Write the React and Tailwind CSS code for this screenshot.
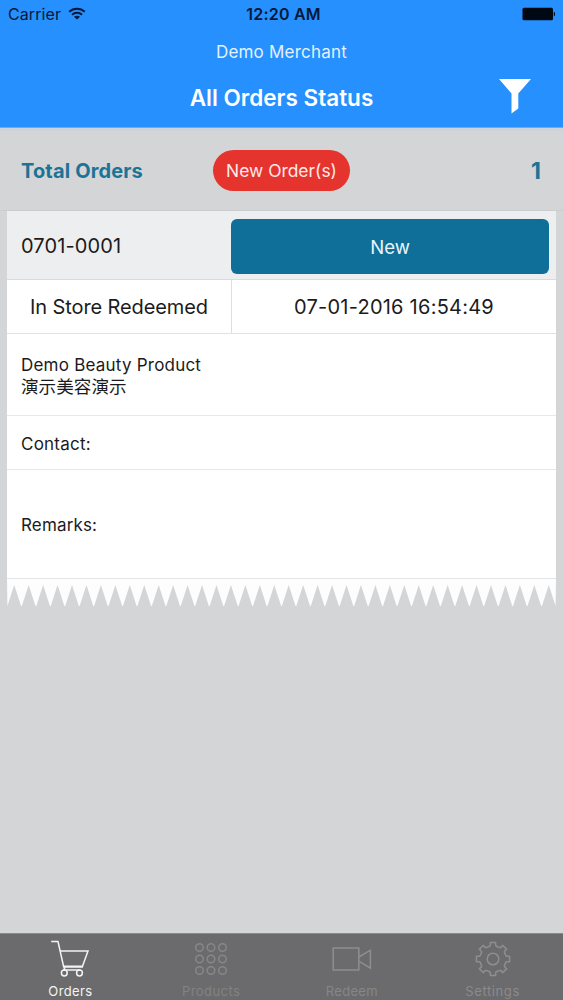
import React from 'react';

const TEETH = 38;

// Points of the torn receipt edge, one notch per tooth
const tornEdge = () => {
    const step = 549 / TEETH;
    const points = ['0,0'];
    for (let i = 0; i < TEETH; i++) {
        const x = i * step;
        points.push(`${(x + 0.4).toFixed(2)},27`);
        points.push(`${(x + step / 2).toFixed(2)},6`);
        points.push(`${(x + step - 0.4).toFixed(2)},27`);
    }
    points.push('549,0');
    return points.join(' ');
};

const gearPoints = () => {
    const points = [];
    for (let i = 0; i < 8; i++) {
        const base = i * 45 - 90;
        [[-15, 13.2], [-11, 14], [-9, 16.8], [9, 16.8], [11, 14], [15, 13.2]].forEach(([offset, r]) => {
            const a = ((base + offset) * Math.PI) / 180;
            points.push(`${(18 + r * Math.cos(a)).toFixed(2)},${(18 + r * Math.sin(a)).toFixed(2)}`);
        });
    }
    return points.join(' ');
};

const WifiIcon = () => (
    <svg width="18" height="14" viewBox="0 0 18 14" fill="none" stroke="#04183a" strokeWidth="2">
        <path d="M1.2 4.7C5.5 0.6 12.5 0.6 16.8 4.7" />
        <path d="M4 7.7C6.8 5.1 11.2 5.1 14 7.7" />
        <path d="M9 12.5L6 9.7C7.6 8.3 10.4 8.3 12 9.7Z" fill="#04183a" stroke="none" />
    </svg>
);

const BatteryIcon = () => (
    <svg width="34" height="14" viewBox="0 0 34 14" fill="#000814">
        <rect x="0.5" y="0.7" width="30.5" height="12.6" rx="1.5" />
        <path d="M31.8 4.8C33.5 5 33.5 9 31.8 9.2Z" />
    </svg>
);

const FilterIcon = () => (
    <svg width="32" height="36" viewBox="0 0 32 36" fill="#fff">
        <path d="M0 0H32L19.3 14.5V29.5L12.5 34.5V14.5Z" />
    </svg>
);

const CartIcon = () => (
    <svg width="40" height="38" viewBox="0 0 40 38" fill="none" stroke="#f4f4f4" strokeWidth="1.5">
        <path d="M1.2 1.5H8L13.7 27H33" />
        <path d="M9.9 11H38L32.5 26.3H13.5" />
        <path d="M14.8 27L14 30H30.5" />
        <circle cx="14.3" cy="33" r="2.9" />
        <circle cx="29.5" cy="33" r="2.9" />
    </svg>
);

const ProductsIcon = () => (
    <svg width="34" height="34" viewBox="0 0 34 34" fill="none" stroke="#878788" strokeWidth="1.5">
        {[5.5, 17, 28.5].map((cy) =>
            [5.5, 17, 28.5].map((cx) => <circle key={`${cx}-${cy}`} cx={cx} cy={cy} r="3.8" />)
        )}
    </svg>
);

const RedeemIcon = () => (
    <svg width="40" height="26" viewBox="0 0 40 26" fill="none" stroke="#8e8e8f" strokeWidth="1.5">
        <rect x="1.2" y="2" width="25.6" height="22" />
        <path d="M26.8 11L38.4 4.2V22.2L26.8 15.2" />
    </svg>
);

const SettingsIcon = () => (
    <svg width="36" height="36" viewBox="0 0 36 36" fill="none" stroke="#8e8e8f" strokeWidth="1.5">
        <polygon points={gearPoints()} strokeLinejoin="round" />
        <circle cx="18" cy="18" r="5.8" />
    </svg>
);

const tabs = [
    { label: 'Orders', icon: <CartIcon />, color: 'text-[#f4f4f4]', tracking: 'tracking-[0.35px]' },
    { label: 'Products', icon: <ProductsIcon />, color: 'text-[#828283]', tracking: 'tracking-[0.45px]' },
    { label: 'Redeem', icon: <RedeemIcon />, color: 'text-[#868687]', tracking: 'tracking-[0.3px]' },
    { label: 'Settings', icon: <SettingsIcon />, color: 'text-[#8a8a8b]', tracking: 'tracking-[0.6px]' },
];

const App = () => {
    return (
        <div className="w-[563px] h-[1000px] flex flex-col overflow-hidden bg-[#d4d5d7] font-['Inter','Noto_Sans_CJK_SC',sans-serif] text-[#1b1b1d]">
            {/* Header */}
            <header className="h-[128px] shrink-0 bg-[#2590fe] border-b border-[#6caae8] text-white">
                <div className="h-7 grid grid-cols-3 items-center pl-2 pr-[7px] text-[#04183a]">
                    <div className="flex items-center gap-[7px]">
                        <span className="text-[16px] leading-7 tracking-[0.1px]">Carrier</span>
                        <WifiIcon />
                    </div>
                    <span className="pl-[3px] text-center text-[16px] leading-7 font-semibold tracking-[0.2px]">12:20 AM</span>
                    <div className="flex justify-end">
                        <BatteryIcon />
                    </div>
                </div>
                <p className="h-[46px] text-center text-[17px] leading-[48px] tracking-[0.22px] text-[#e2f2ff]">Demo Merchant</p>
                <div className="h-[48px] grid grid-cols-[64px_1fr_64px]">
                    <h1 className="col-start-2 text-center text-[22.5px] leading-[48px] font-semibold">All Orders Status</h1>
                    <div className="flex pt-[5px]">
                        <FilterIcon />
                    </div>
                </div>
            </header>

            {/* Summary */}
            <section className="h-[83px] shrink-0 flex items-center border-t-[3px] border-t-[#cdd3db] border-b border-b-[#cccdce] pl-[21px] pr-[22px] text-[#1d7396]">
                <h2 className="w-[192px] text-[20px] font-bold tracking-[0.15px]">Total Orders</h2>
                <span className="w-[137px] h-[41px] rounded-full bg-[#e5332e] text-[#ffe9e8] text-[17.4px] leading-[41px] text-center">
                    New Order(s)
                </span>
                <span className="ml-auto pt-[2px] text-[23px] font-bold">1</span>
            </section>

            {/* Order receipt */}
            <main className="flex-1 pl-[7px] pr-[7px]">
                <div className="w-[549px] bg-white">
                    <div className="h-[69px] flex bg-[#edeeef] border-b border-[#d9dbdc]">
                        <span className="w-[224px] pl-[14px] text-[20px] leading-[71px] tracking-[0.12px]">0701-0001</span>
                        <button className="w-[318px] h-[55px] mt-2 pt-[2px] rounded-[6px] bg-[#0f6f99] text-[#e9f5fa] text-[18.6px]">
                            New
                        </button>
                    </div>
                    <div className="h-[54px] flex border-b border-[#dfe1e2] text-[20px] leading-[55px] text-center">
                        <span className="w-[225px] border-r border-[#dcdedf] tracking-[-0.1px]">In Store Redeemed</span>
                        <span className="flex-1 tracking-[0.24px]">07-01-2016 16:54:49</span>
                    </div>
                    <div className="h-[82px] flex flex-col justify-center border-b border-[#e8e8e9] pt-[3px] pl-[14px] text-[17px] leading-[21px]">
                        <p className="tracking-[0.22px]">Demo Beauty Product</p>
                        <p className="text-[17.6px]">演示美容演示</p>
                    </div>
                    <p className="h-[54px] border-b border-[#e6e7e8] pl-[14px] text-[17px] leading-[57px] tracking-[0.22px]">Contact:</p>
                    <p className="h-[109px] border-b border-[#e2e3e5] pl-[14px] text-[17px] leading-[111px] tracking-[0.15px]">Remarks:</p>
                </div>
                <svg className="block" width="549" height="27" viewBox="0 0 549 27" fill="#fdfdfe">
                    <polygon points={tornEdge()} />
                </svg>
            </main>

            {/* Tab bar */}
            <nav className="h-[67px] shrink-0 grid grid-cols-4 bg-[#6b6b6d] border-t border-[#8a8a8c]">
                {tabs.map((tab) => (
                    <div key={tab.label} className="flex flex-col items-center">
                        <div className="h-[49px] pt-px flex items-center">{tab.icon}</div>
                        <span className={`text-[13px] leading-4 ${tab.color} ${tab.tracking}`}>{tab.label}</span>
                    </div>
                ))}
            </nav>
        </div>
    );
};

export default App;
